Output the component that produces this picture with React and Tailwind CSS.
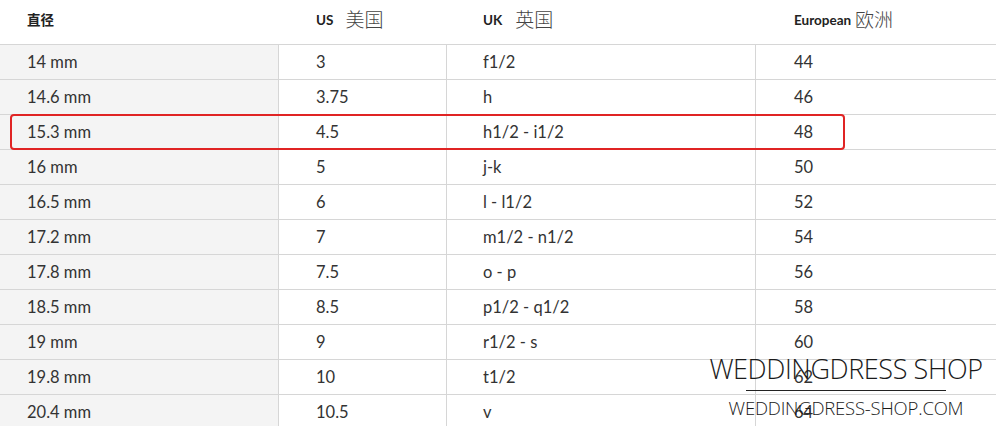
import React from "react";

const rows = [
  ["14 mm", "3", "f1/2", "44"],
  ["14.6 mm", "3.75", "h", "46"],
  ["15.3 mm", "4.5", "h1/2 - i1/2", "48"],
  ["16 mm", "5", "j-k", "50"],
  ["16.5 mm", "6", "l - l1/2", "52"],
  ["17.2 mm", "7", "m1/2 - n1/2", "54"],
  ["17.8 mm", "7.5", "o - p", "56"],
  ["18.5 mm", "8.5", "p1/2 - q1/2", "58"],
  ["19 mm", "9", "r1/2 - s", "60"],
  ["19.8 mm", "10", "t1/2", "62"],
  ["20.4 mm", "10.5", "v", "64"],
];

const grid = "grid grid-cols-[279px_168px_309px_1fr]";

export default function App() {
  return (
    <div className="relative w-[996px] h-[426px] overflow-hidden bg-white text-[#333] font-['Lato','Noto_Sans_CJK_SC',sans-serif]">
      <div className={`${grid} h-[45px] border-b border-[#d6d6d6] items-center text-[13.5px] text-[#222]`}>
        <div className="pl-[27px] pb-[3px] font-bold">直径</div>
        <div className="pl-[37px] pb-[3px] flex items-center">
          <span className="font-bold">US</span>
          <span className="ml-[12px] text-[19px] text-[#444] font-light">美国</span>
        </div>
        <div className="pl-[36px] pb-[3px] flex items-center">
          <span className="font-bold">UK</span>
          <span className="ml-[13px] text-[19px] text-[#444] font-light">英国</span>
        </div>
        <div className="pl-[38px] pb-[3px] flex items-center">
          <span className="font-bold">European</span>
          <span className="ml-[4px] text-[19px] text-[#444] font-light">欧洲</span>
        </div>
      </div>
      {rows.map((r) => (
        <div key={r[0]} className={`${grid} h-[35px] border-b border-[#d6d6d6] text-[16.5px]`}>
          <div className="pl-[27px] flex items-center bg-[#f4f4f4] border-r border-[#d6d6d6]">{r[0]}</div>
          <div className="pl-[37px] flex items-center border-r border-[#d6d6d6]">{r[1]}</div>
          <div className="pl-[36px] flex items-center border-r border-[#d6d6d6]">{r[2]}</div>
          <div className="pl-[38px] flex items-center">{r[3]}</div>
        </div>
      ))}

      {/* highlight */}
      <div className="absolute left-[10px] top-[114px] w-[835px] h-[36px] border-2 border-[#e02424] rounded-[4px]"></div>

      {/* watermark */}
      <div className="absolute left-[696px] top-[351px] w-[300px] flex flex-col items-center text-[#1a1a1a] font-['Open_Sans',sans-serif]">
        <div className="text-[27px] leading-[36px] font-light tracking-[-0.4px]">WEDDINGDRESS SHOP</div>
        <div className="mt-[3px] w-[200px] h-px bg-[#222]"></div>
        <div className="mt-[6px] text-[18.5px] leading-[22px] font-light tracking-[-0.2px]">WEDDINGDRESS-SHOP.COM</div>
      </div>
    </div>
  );
}
